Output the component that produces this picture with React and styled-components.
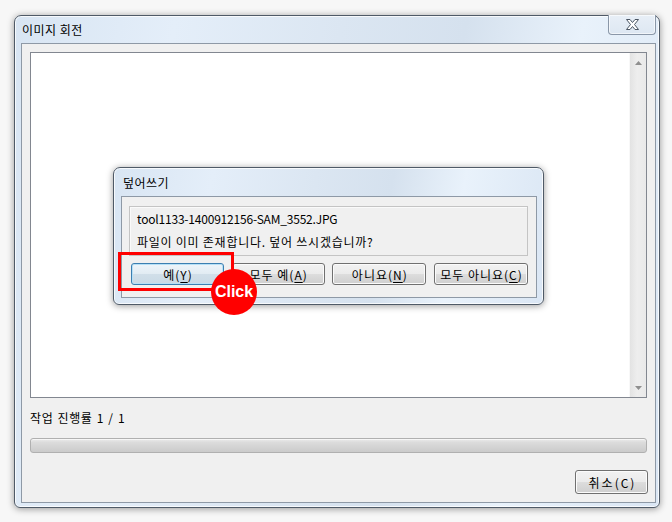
import React from "react";
import styled, { createGlobalStyle } from "styled-components";

const GlobalStyle = createGlobalStyle`
  body {
    margin: 0;
    background: #f7f7f7;
    font-family: "Noto Sans CJK KR", "Noto Sans", sans-serif;
    font-size: 12px;
    color: #000;
  }
`;

const glass = `linear-gradient(100deg, #d8e5f3 0%, #e4eef9 22%, #dbe6f2 45%, #d5e1ee 62%, #e9f2fb 78%, #dae6f4 100%)`;

const Page = styled.div`
  box-sizing: border-box;
  height: 522px;
  padding: 15px 0 0 14px;
`;

const Frame = styled.div`
  position: relative;
  box-sizing: border-box;
  display: flex;
  flex-direction: column;
  width: ${props => props.w}px;
  height: ${props => props.h}px;
  padding: ${props => props.pad};
  border: 1px solid #4f5a67;
  border-radius: 7px 7px 6px 6px;
  background: ${glass};
  box-shadow: 0 1px 7px rgba(0, 0, 0, 0.4), inset 0 0 0 1px rgba(255, 255, 255, 0.75);
`;

const TitleBar = styled.div`
  display: flex;
  align-items: center;
  height: ${props => props.h}px;
  padding-left: ${props => props.indent}px;
  flex: none;
  letter-spacing: 0.5px;
`;

const CloseButton = styled.div`
  display: flex;
  align-items: center;
  justify-content: center;
  align-self: flex-start;
  box-sizing: border-box;
  margin-left: auto;
  margin-top: -1px;
  width: 48px;
  height: 20px;
  border: 1px solid #8a97a8;
  border-top: none;
  border-radius: 0 0 4px 4px;
  background: linear-gradient(#e8eff7, #dde7f2);
  box-shadow: inset 0 0 0 1px rgba(255, 255, 255, 0.6);
`;

const Client = styled.div`
  flex: 1;
  display: flex;
  flex-direction: column;
  border: 1px solid #8e99a6;
  background: #f0f0f0;
  padding: ${props => props.pad};
`;

const ListBox = styled.div`
  display: flex;
  justify-content: flex-end;
  height: 346px;
  box-sizing: border-box;
  border: 1px solid #828790;
  background: #fff;
`;

const ScrollBar = styled.div`
  display: flex;
  flex-direction: column;
  justify-content: space-between;
  align-items: center;
  box-sizing: border-box;
  width: 17px;
  padding: 8px 0 7px;
  border-left: 1px solid #f8f8f8;
  background: linear-gradient(90deg, #e3e3e3, #eeeeee 45%, #e9e9e9);
`;

const Label = styled.div`
  margin-top: 13px;
  line-height: 14px;
  letter-spacing: 0.6px;
  word-spacing: 1px;
`;

const Progress = styled.div`
  margin-top: 13px;
  height: 15px;
  box-sizing: border-box;
  border: 1px solid #b0b0b0;
  border-radius: 3px;
  background: linear-gradient(#ececec 0%, #dcdcdc 25%, #d4d4d4 60%, #cbcbcb 100%);
  box-shadow: inset 0 1px 0 #f6f6f6;
`;

const Button = styled.div`
  display: flex;
  align-items: center;
  justify-content: center;
  box-sizing: border-box;
  width: ${props => props.w}px;
  height: ${props => props.h}px;
  border: 1px solid ${props => (props.primary ? "#3c7fb1" : "#707070")};
  border-radius: 3px;
  background: ${props =>
    props.primary
      ? "linear-gradient(#eef5fa 0%, #e2ecf3 48%, #d1dfe9 50%, #c9d9e5 100%)"
      : "linear-gradient(#f2f2f2 0%, #ebebeb 48%, #dddddd 50%, #cfcfcf 100%)"};
  box-shadow: inset 0 0 0 1px ${props => (props.primary ? "#b7e0f6" : "#fbfbfb")};
  letter-spacing: ${props => props.spacing || 1}px;
  padding-left: ${props => props.spacing || 1}px;

  u {
    text-decoration: underline;
    text-underline-offset: 2px;
  }
`;

const CancelRow = styled.div`
  display: flex;
  justify-content: flex-end;
  margin: 17px -1px 0 0;
`;

const Panel = styled.div`
  box-sizing: border-box;
  height: 50px;
  padding: 0 7px;
  border: 1px solid #c4c4c4;
  box-shadow: inset 1px 1px 0 #fafafa;
  line-height: 23px;
`;

const PanelLine = styled.div`
  letter-spacing: ${props => props.spacing}px;
`;

const ButtonRow = styled.div`
  display: flex;
  justify-content: space-between;
  margin-top: 7px;
  padding-left: 2px;
`;

const Highlight = styled.div`
  position: absolute;
  left: 103px;
  top: 236px;
  width: 116px;
  height: 39px;
  box-sizing: border-box;
  border: 3px solid #ff0000;
`;

const ClickBadge = styled.div`
  position: absolute;
  left: 196px;
  top: 253px;
  width: 46px;
  height: 46px;
  border-radius: 50%;
  background: #ff0000;
  color: #fff;
  display: flex;
  align-items: center;
  justify-content: center;
  font-family: "Liberation Sans", Arial, sans-serif;
  font-weight: bold;
  font-size: 16px;
`;

const DialogSpot = styled.div`
  position: absolute;
  left: 98px;
  top: 151px;
`;

function CloseGlyph() {
  return (
    <svg width="13" height="11" viewBox="0 0 13 11">
      <polygon
        points="0.5,0.5 4,0.5 6.5,3.5 9,0.5 12.5,0.5 8.5,5.5 12.5,10.5 9,10.5 6.5,7.5 4,10.5 0.5,10.5 4.5,5.5"
        fill="#fff"
        stroke="#4a5563"
        strokeWidth="1"
        strokeLinejoin="round"
      />
    </svg>
  );
}

function Arrow({ down }) {
  return (
    <svg width="7" height="4" viewBox="0 0 7 4">
      <polygon points={down ? "0,0 7,0 3.5,4" : "3.5,0 7,4 0,4"} fill="#8f8f8f" />
    </svg>
  );
}

function Overwrite() {
  return (
    <Frame w={431} h={138} pad="0 6px 6px 7px">
      <TitleBar h={28} indent={2}>덮어쓰기</TitleBar>
      <Client pad="9px 8px 0 7px">
        <Panel>
          <PanelLine spacing={-0.2}>tool1133-1400912156-SAM_3552.JPG</PanelLine>
          <PanelLine spacing={0.75}>파일이 이미 존재합니다. 덮어 쓰시겠습니까?</PanelLine>
        </Panel>
        <ButtonRow>
          <Button w={93} h={22} primary>
            예(<u>Y</u>)
          </Button>
          <Button w={93} h={22}>
            모두 예(<u>A</u>)
          </Button>
          <Button w={94} h={22}>
            아니요(<u>N</u>)
          </Button>
          <Button w={94} h={22}>
            모두 아니요(<u>C</u>)
          </Button>
        </ButtonRow>
      </Client>
    </Frame>
  );
}

export default function App() {
  return (
    <>
      <GlobalStyle />
      <Page>
        <Frame w={646} h={493} pad="0 3px 5px 6px">
          <TitleBar h={27} indent={1}>
            이미지 회전
            <CloseButton>
              <CloseGlyph />
            </CloseButton>
          </TitleBar>
          <Client pad="8px">
            <ListBox>
              <ScrollBar>
                <Arrow />
                <Arrow down />
              </ScrollBar>
            </ListBox>
            <Label>작업 진행률 1 / 1</Label>
            <Progress />
            <CancelRow>
              <Button w={73} h={24} spacing={2}>
                취소(C)
              </Button>
            </CancelRow>
          </Client>
          <DialogSpot>
            <Overwrite />
          </DialogSpot>
          <Highlight />
          <ClickBadge>Click</ClickBadge>
        </Frame>
      </Page>
    </>
  );
}
